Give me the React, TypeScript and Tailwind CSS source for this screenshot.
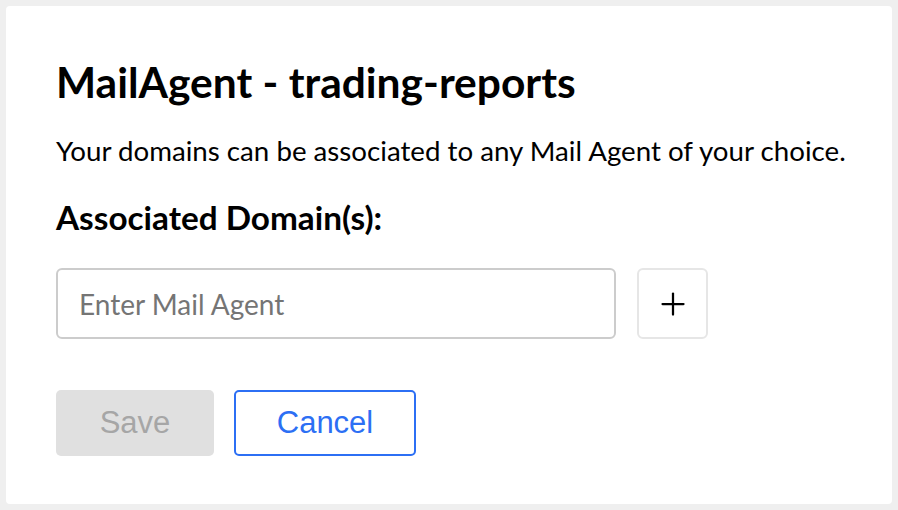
import { Plus } from 'lucide-react';

export default function App() {
  return (
    <div className="min-h-[510px] w-full bg-[#efefef] p-[6px] font-['Lato',sans-serif]">
      <div className="rounded-[4px] bg-white pl-[50px] pr-[40px] pt-[51px] pb-[48px]">
        <h1 className="text-[42.5px] leading-[50px] font-bold text-black">MailAgent - trading-reports</h1>
        <p className="mt-[27px] text-[27.7px] leading-[34px] text-black">
          Your domains can be associated to any Mail Agent of your choice.
        </p>
        <h2 className="mt-[29px] text-[33.3px] leading-[40px] font-bold text-black">Associated Domain(s):</h2>

        <div className="mt-[31px] flex items-center gap-[21px]">
          <input
            type="text"
            placeholder="Enter Mail Agent"
            className="h-[71px] w-[560px] rounded-[6px] border-2 border-[#cccccc] px-[21px] text-[28px] text-black outline-none placeholder:text-[#757575]"
          />
          <button className="flex h-[71px] w-[71px] items-center justify-center rounded-[6px] border-2 border-[#e6e6e6] bg-white">
            <Plus className="h-[36px] w-[36px] text-black" strokeWidth={1.5} />
          </button>
        </div>

        <div className="mt-[51px] flex gap-[20px] font-['Liberation_Sans',Arial,sans-serif]">
          <button className="h-[66px] w-[158px] rounded-[5px] bg-[#e0e0e0] text-[31px] text-[#a6a6a6]">Save</button>
          <button className="h-[66px] w-[182px] rounded-[5px] border-2 border-[#2c6ff4] bg-white text-[31px] text-[#2c6ff4]">
            Cancel
          </button>
        </div>
      </div>
    </div>
  );
}
